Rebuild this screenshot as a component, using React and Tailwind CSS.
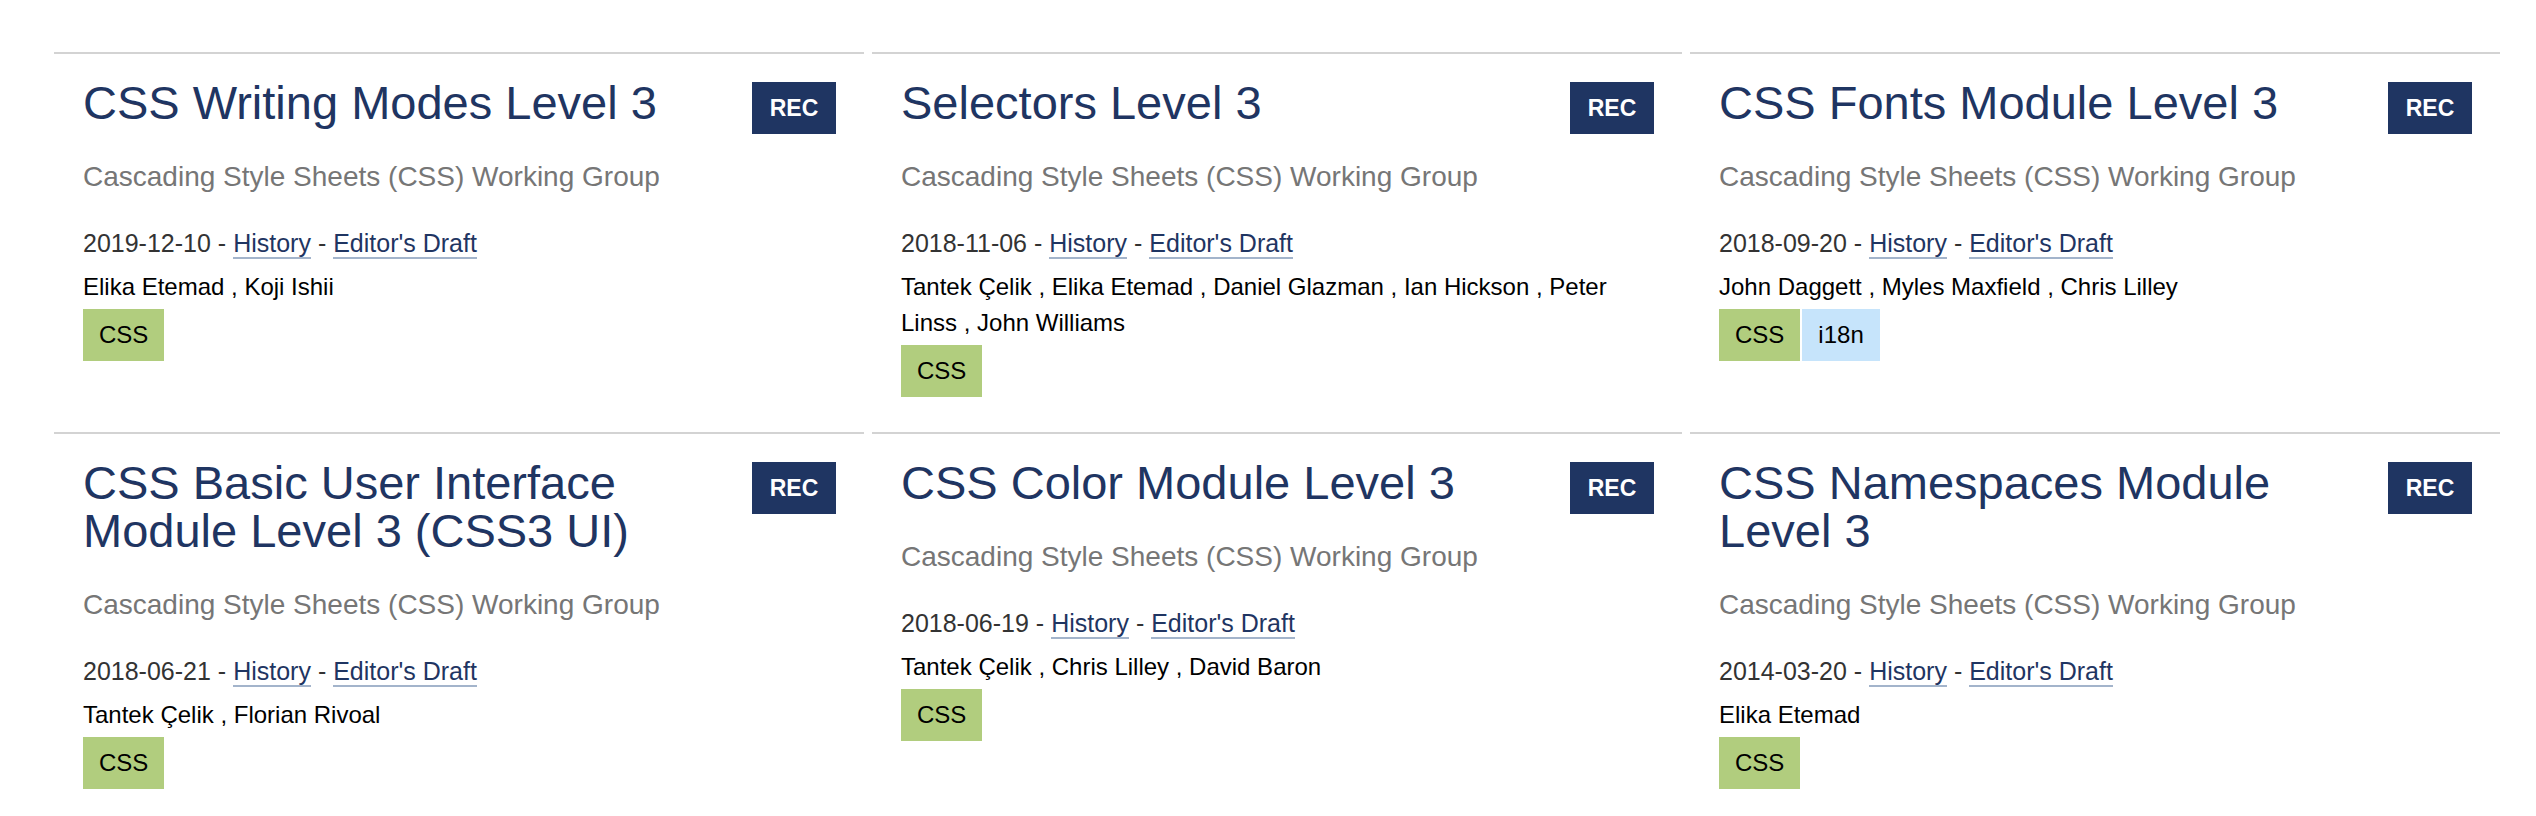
import React from 'react';

// Datos de las especificaciones
const specs = [
    {
        title: 'CSS Writing Modes Level 3',
        date: '2019-12-10',
        editors: ['Elika Etemad', 'Koji Ishii'],
        tags: ['CSS'],
    },
    {
        title: 'Selectors Level 3',
        date: '2018-11-06',
        editors: ['Tantek Çelik', 'Elika Etemad', 'Daniel Glazman', 'Ian Hickson', 'Peter Linss', 'John Williams'],
        tags: ['CSS'],
    },
    {
        title: 'CSS Fonts Module Level 3',
        date: '2018-09-20',
        editors: ['John Daggett', 'Myles Maxfield', 'Chris Lilley'],
        tags: ['CSS', 'i18n'],
    },
    {
        title: 'CSS Basic User Interface Module Level 3 (CSS3 UI)',
        date: '2018-06-21',
        editors: ['Tantek Çelik', 'Florian Rivoal'],
        tags: ['CSS'],
    },
    {
        title: 'CSS Color Module Level 3',
        date: '2018-06-19',
        editors: ['Tantek Çelik', 'Chris Lilley', 'David Baron'],
        tags: ['CSS'],
    },
    {
        title: 'CSS Namespaces Module Level 3',
        date: '2014-03-20',
        editors: ['Elika Etemad'],
        tags: ['CSS'],
    },
];

// Color de fondo de cada etiqueta
const tagColor = (tag) => (tag === 'i18n' ? 'bg-[#c6e4fb]' : 'bg-[#b1cd7e]');

function SpecCard({ title, date, editors, tags }) {
    return (
        <div className="border-t-2 border-[#d3d3d3] pt-[25px] pb-[35px] pl-[29px] pr-[28px]">
            <div className="flex items-start justify-between gap-4">
                <h2 className="text-[47px] leading-[48px] font-normal text-[#1f3562]">{title}</h2>
                {/* El margen negativo evita que la insignia alargue la fila */}
                <span className="mt-[3px] -mb-[7px] flex h-[52px] w-[84px] shrink-0 items-center justify-center bg-[#1f3562] text-[23px] font-bold text-white">
                    REC
                </span>
            </div>

            <p className="mt-[30px] text-[28px] leading-[40px] text-[#767676]">Cascading Style Sheets (CSS) Working Group</p>

            <p className="mt-[28px] text-[25px] leading-[36px] text-[#333333]">
                {date} -{' '}
                <a href="#" className="border-b-2 border-[#a3b4cb] text-[#1f3562]">
                    History
                </a>{' '}
                -{' '}
                <a href="#" className="border-b-2 border-[#a3b4cb] text-[#1f3562]">
                    Editor's Draft
                </a>
            </p>

            <p className="mt-2 text-[24px] leading-[36px] text-black">{editors.join(' , ')}</p>

            <div className="mt-1 flex gap-[2px]">
                {tags.map((tag) => (
                    <span key={tag} className={`flex h-[52px] items-center px-4 text-[24px] text-black ${tagColor(tag)}`}>
                        {tag}
                    </span>
                ))}
            </div>
        </div>
    );
}

export default function App() {
    return (
        <div className="min-h-screen bg-white pt-[52px] pl-[54px] font-['Liberation_Sans',Arial,sans-serif]">
            <div className="grid w-[2446px] grid-cols-3 gap-x-2">
                {specs.map((spec) => (
                    <SpecCard key={spec.title} {...spec} />
                ))}
            </div>
        </div>
    );
}
